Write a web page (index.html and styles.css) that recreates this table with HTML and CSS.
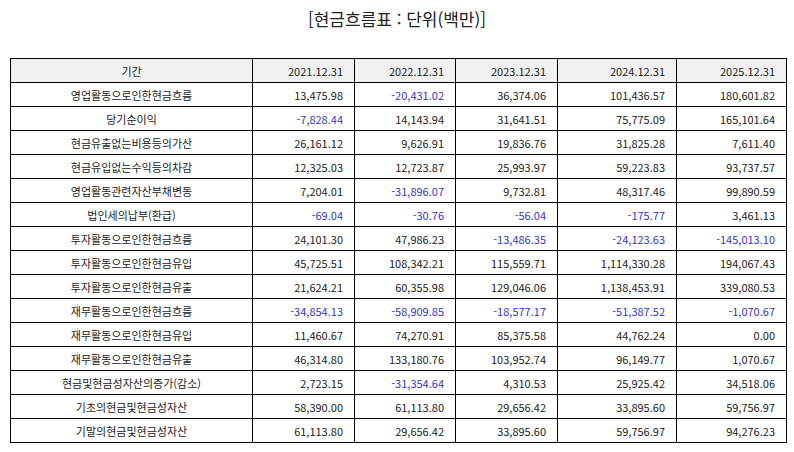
FILE: index.html
```html
<!DOCTYPE html>
<html lang="ko">
<head>
<meta charset="utf-8">
<link rel="stylesheet" href="styles.css">
</head>
<body>
<div class="page">
  <h1 class="title">[현금흐름표 : 단위(백만)]</h1>
  <table class="cf">
    <colgroup>
      <col class="c-label"><col class="c1"><col class="c2"><col class="c3"><col class="c4"><col class="c5">
    </colgroup>
    <thead>
      <tr><th class="lbl">기간</th><th>2021.12.31</th><th>2022.12.31</th><th>2023.12.31</th><th>2024.12.31</th><th>2025.12.31</th></tr>
    </thead>
    <tbody>
      <tr><td class="lbl">영업활동으로인한현금흐름</td><td>13,475.98</td><td class="neg">-20,431.02</td><td>36,374.06</td><td>101,436.57</td><td>180,601.82</td></tr>
      <tr><td class="lbl">당기순이익</td><td class="neg">-7,828.44</td><td>14,143.94</td><td>31,641.51</td><td>75,775.09</td><td>165,101.64</td></tr>
      <tr><td class="lbl">현금유출없는비용등의가산</td><td>26,161.12</td><td>9,626.91</td><td>19,836.76</td><td>31,825.28</td><td>7,611.40</td></tr>
      <tr><td class="lbl">현금유입없는수익등의차감</td><td>12,325.03</td><td>12,723.87</td><td>25,993.97</td><td>59,223.83</td><td>93,737.57</td></tr>
      <tr><td class="lbl">영업활동관련자산부채변동</td><td>7,204.01</td><td class="neg">-31,896.07</td><td>9,732.81</td><td>48,317.46</td><td>99,890.59</td></tr>
      <tr><td class="lbl">법인세의납부(환급)</td><td class="neg">-69.04</td><td class="neg">-30.76</td><td class="neg">-56.04</td><td class="neg">-175.77</td><td>3,461.13</td></tr>
      <tr><td class="lbl">투자활동으로인한현금흐름</td><td>24,101.30</td><td>47,986.23</td><td class="neg">-13,486.35</td><td class="neg">-24,123.63</td><td class="neg">-145,013.10</td></tr>
      <tr><td class="lbl">투자활동으로인한현금유입</td><td>45,725.51</td><td>108,342.21</td><td>115,559.71</td><td>1,114,330.28</td><td>194,067.43</td></tr>
      <tr><td class="lbl">투자활동으로인한현금유출</td><td>21,624.21</td><td>60,355.98</td><td>129,046.06</td><td>1,138,453.91</td><td>339,080.53</td></tr>
      <tr><td class="lbl">재무활동으로인한현금흐름</td><td class="neg">-34,854.13</td><td class="neg">-58,909.85</td><td class="neg">-18,577.17</td><td class="neg">-51,387.52</td><td class="neg">-1,070.67</td></tr>
      <tr><td class="lbl">재무활동으로인한현금유입</td><td>11,460.67</td><td>74,270.91</td><td>85,375.58</td><td>44,762.24</td><td>0.00</td></tr>
      <tr><td class="lbl">재무활동으로인한현금유출</td><td>46,314.80</td><td>133,180.76</td><td>103,952.74</td><td>96,149.77</td><td>1,070.67</td></tr>
      <tr><td class="lbl">현금및현금성자산의증가(감소)</td><td>2,723.15</td><td class="neg">-31,354.64</td><td>4,310.53</td><td>25,925.42</td><td>34,518.06</td></tr>
      <tr><td class="lbl">기초의현금및현금성자산</td><td>58,390.00</td><td>61,113.80</td><td>29,656.42</td><td>33,895.60</td><td>59,756.97</td></tr>
      <tr><td class="lbl">기말의현금및현금성자산</td><td>61,113.80</td><td>29,656.42</td><td>33,895.60</td><td>59,756.97</td><td>94,276.23</td></tr>
    </tbody>
  </table>
</div>
</body>
</html>
```

FILE: styles.css
```css
html, body {
  margin: 0;
  padding: 0;
  background: #ffffff;
}
body {
  font-family: "Noto Sans CJK KR", "Noto Sans", sans-serif;
  color: #222222;
}
.page {
  width: 794px;
  padding-top: 7px;
}
.title {
  margin: 0;
  height: 51px;
  font-size: 17px;
  font-weight: 400;
  line-height: 24px;
  text-align: center;
  color: #222222;
}
.cf {
  margin-left: 10px;
  width: 776px;
  table-layout: fixed;
  border-collapse: collapse;
  font-size: 11px;
}
.c-label { width: 242px; }
.c1 { width: 102px; }
.c2 { width: 101px; }
.c3 { width: 102px; }
.c4 { width: 119px; }
.c5 { width: 110px; }
.cf th, .cf td {
  border: 1px solid #000000;
  height: 23px;
  padding: 0 11px 0 6px;
  text-align: right;
  font-weight: 400;
  line-height: 14px;
  color: #222222;
  white-space: nowrap;
}
.cf th {
  background: #f0f0f0;
}
.cf .lbl {
  text-align: center;
  padding: 0 6px;
}
.cf .neg {
  color: #3535c8;
}
```
